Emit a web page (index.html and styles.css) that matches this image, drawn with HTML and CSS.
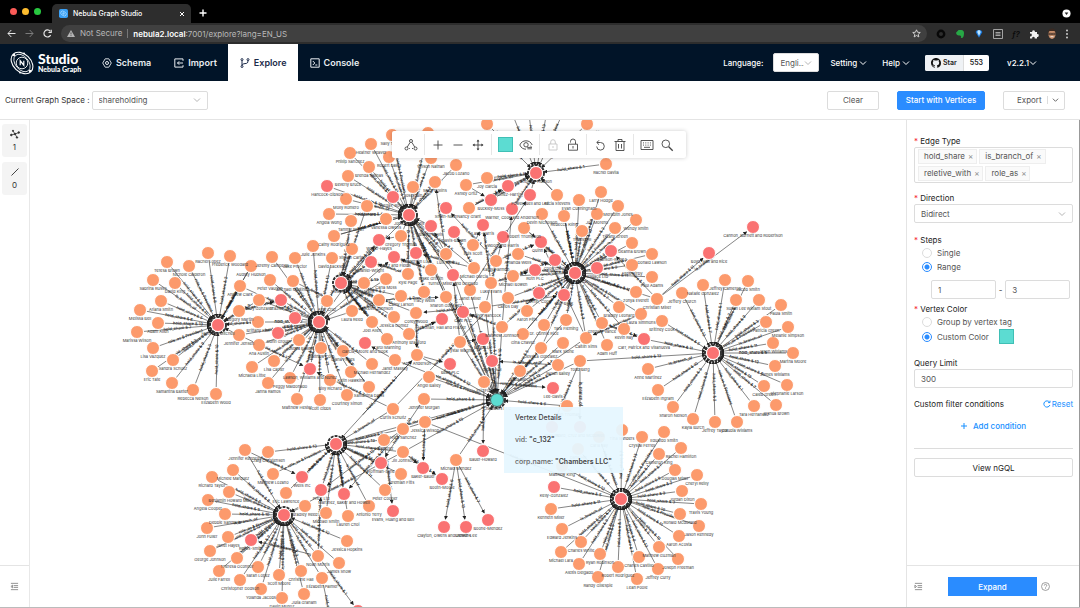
FILE: index.html
```html
<!DOCTYPE html>
<html lang="en">
<head>
  <meta charset="UTF-8">
  <meta name="viewport" content="width=device-width, initial-scale=1.0">
  <title>Nebula Graph Studio</title>
  <link rel="stylesheet" href="styles.css">
</head>
<body>

  <!-- Browser window -->
  <div class="tab-strip">
    <div class="lights">
      <span class="light light-red"></span>
      <span class="light light-yellow"></span>
      <span class="light light-green"></span>
    </div>
    <div class="browser-tab">
      <svg class="favicon" viewBox="0 0 10 10"><rect width="10" height="10" rx="2" fill="#3aa0f5"/><ellipse cx="5" cy="5" rx="3.4" ry="2.3" transform="rotate(35 5 5)" fill="none" stroke="#a8dbff" stroke-width=".8"/><circle cx="5" cy="5" r="1.3" fill="#8accff"/></svg>
      <span class="browser-title">Nebula Graph Studio</span>
      <button class="plain" aria-label="Close tab"><svg width="6" height="6" viewBox="0 0 6 6"><path d="M1 1l4 4M5 1l-4 4" stroke="#fff"/></svg></button>
    </div>
    <button class="plain new-tab" aria-label="New tab"><svg width="8" height="8" viewBox="0 0 8 8"><path d="M4 .5v7M.5 4h7" stroke="#fff" stroke-width="1.4"/></svg></button>
    <svg class="profile-dot" viewBox="0 0 10 10"><circle cx="5" cy="5" r="4.5" fill="#fff"/><path d="M3 4h4L5 6.8z" fill="#222"/></svg>
  </div>

  <div class="address-bar">
    <button class="plain" aria-label="Back"><svg width="9" height="9" viewBox="0 0 9 9" fill="none" stroke="#e6e6e6"><path d="M8.5 4.5H1M4.3 1L1 4.5 4.3 8"/></svg></button>
    <button class="plain" aria-label="Forward"><svg width="9" height="9" viewBox="0 0 9 9" fill="none" stroke="#7c7c7c"><path d="M.5 4.5H8M4.7 1L8 4.5 4.7 8"/></svg></button>
    <button class="plain" aria-label="Reload"><svg width="9" height="9" viewBox="0 0 9 9" fill="none" stroke="#e6e6e6" stroke-width="1.2"><path d="M7.6 6A3.5 3.5 0 1 1 7.2 2.3"/><path d="M8.2.8v2.7H5.5"/></svg></button>
    <div class="url">
      <svg width="8" height="7" viewBox="0 0 8 7"><path d="M4 0l4 7H0z" fill="#b5b5b5"/><path d="M4 2.4v2M4 5.2v.9" stroke="#404040" stroke-width=".8"/></svg>
      <span class="not-secure">Not Secure</span>
      <span class="url-text"><b>nebula2.local</b>:7001/explore?lang=EN_US</span>
      <svg class="star" width="9" height="9" viewBox="0 0 10 10" fill="none" stroke="#ddd"><path d="M5 .9l1.2 2.7 3 .3-2.3 2 .7 2.9L5 7.2 2.4 8.8l.7-2.9-2.3-2 3-.3z"/></svg>
    </div>
    <div class="extensions">
      <svg width="10" height="10" viewBox="0 0 10 10"><circle cx="5" cy="5" r="3.2" fill="none" stroke="#080808" stroke-width="2.4"/></svg>
      <svg width="10" height="10" viewBox="0 0 10 10" fill="#27a745"><path d="M1 3.8L3.6 1h2.6c2 .3 3 1.3 2.8 3.2-.1 2.4-.5 4.4-2 4.8-1.4.2-1.6-1.4-.7-1.8-.6-.8-1.4-.9-2-.7C2.5 6.7 1.2 5.5 1 3.8z"/></svg>
      <svg width="10" height="10" viewBox="0 0 10 10"><path d="M1.6 3L3 1.2h4L8.4 3 5 8.8z" fill="#1b7be0"/><path d="M3.2 3L4 1.2h2L6.8 3 5 7z" fill="#bfe6ff"/></svg>
      <svg width="10" height="10" viewBox="0 0 10 10" fill="none" stroke="#b0b0b0"><path d="M.5.5h9v9h-9zM2.5 3.5h5M2.5 5h5M2.5 6.5h5" stroke-width=".9"/></svg>
      <span class="fx">ƒ?</span>
      <svg width="10" height="10" viewBox="0 0 10 10" fill="#f2f2f2"><path d="M1 3h2.2a1.4 1.4 0 1 1 2.7 0H8v2.2a1.4 1.4 0 1 1 0 2.7V9.500H5.700a1.300 1.300 0 1 0-2.500 0H1V7.200a1.300 1.300 0 1 0 0-2.400z"/></svg>
      <svg width="8" height="12" viewBox="1 0 8 12"><ellipse cx="5" cy="6" rx="3.6" ry="5" fill="#c78f6b"/><path d="M1.200 5C1 2 2.500.5 5 .5S9 2 8.800 5L7.500 3h-5z" fill="#3a2a22"/><path d="M1.800 5.300h2.700v1.400H1.800zM5.500 5.300h2.700v1.400H5.500z" fill="none" stroke="#2b211c" stroke-width=".7"/><path d="M3.500 8.700h3" stroke="#fff" stroke-width=".8"/></svg>
      <svg width="4" height="10" viewBox="0 0 4 10" fill="#ddd"><circle cx="2" cy="1.5" r=".9"/><circle cx="2" cy="5" r=".9"/><circle cx="2" cy="8.5" r=".9"/></svg>
    </div>
  </div>

  <!-- Studio navigation -->
  <header class="nav">
    <div class="logo">
      <svg class="logo-mark" viewBox="0 0 24 24" fill="none" stroke="#fff"><ellipse cx="12" cy="12" rx="12.5" ry="8.8" transform="rotate(44 12 12)" stroke-width="1.1"/><ellipse cx="12" cy="12" rx="10" ry="6.6" transform="rotate(50 12 12)" stroke-width=".8"/><circle cx="12" cy="12" r="5.8" stroke-width=".9"/><path d="M10.200 14.200V9.800l3.600 4.400V9.800" stroke-width="1.2"/><g fill="#fff" stroke="none"><circle cx="4" cy="4" r="1.2"/><circle cx="20" cy="20" r="1.2"/><circle cx="14" cy="2.5" r="1"/><circle cx="10" cy="21.5" r="1"/></g></svg>
      <div class="logo-text">
        <span class="logo-name">Studio</span>
        <span class="logo-sub">Nebula Graph</span>
      </div>
    </div>
    <nav class="nav-tabs">
      <a class="nav-tab" href="#schema"><svg width="10" height="10" viewBox="0 0 10 10" fill="none" stroke="currentColor"><path d="M3.200.8h3.600L9.300 5 6.800 9.200H3.200L.7 5z" stroke-width=".9"/><circle cx="5" cy="5" r="1.5"/></svg>Schema</a>
      <a class="nav-tab" href="#import"><svg width="10" height="10" viewBox="0 0 10 10" fill="none" stroke="currentColor"><path d="M9 2.800V.9H.8v8.200H9V7.200M3.500 5H9M5.200 3.300L3.500 5l1.700 1.700"/></svg>Import</a>
      <a class="nav-tab nav-active" href="#explore"><svg width="10" height="10" viewBox="0 0 10 10" fill="none" stroke="currentColor"><circle cx="2" cy="1.6" r="1"/><circle cx="8" cy="1.6" r="1"/><circle cx="2" cy="8.5" r="1"/><path d="M2 2.600v5M8 2.600c0 2.600-1 2.800-3 3-1.700.2-2.600.5-3 1.500"/></svg>Explore</a>
      <a class="nav-tab" href="#console"><svg width="10" height="10" viewBox="0 0 10 10" fill="none" stroke="currentColor"><path d="M.8.8h8.400v8.400H.8zM2.800 3l2 2-2 2M5.300 7h2"/></svg>Console</a>
    </nav>
    <div class="nav-right">
      <label for="language">Language:</label>
      <div class="select language">
        <select id="language"><option>Engli...</option><option>中文</option></select>
        <svg class="chevron" viewBox="0 0 8 8"><path d="M1 2.500l3 3 3-3"/></svg>
      </div>
      <button class="plain menu">Setting <svg class="chevron" viewBox="0 0 8 8"><path d="M1 2.500l3 3 3-3"/></svg></button>
      <button class="plain menu">Help <svg class="chevron" viewBox="0 0 8 8"><path d="M1 2.500l3 3 3-3"/></svg></button>
      <a class="github" href="#star">
        <span class="github-star"><svg width="10" height="10" viewBox="0 0 16 16"><path fill="#111" d="M8 0C3.580 0 0 3.580 0 8c0 3.540 2.290 6.530 5.470 7.590.4.070.55-.17.55-.38v-1.500c-2.230.5-2.700-.95-2.700-.95-.36-.92-.89-1.170-.89-1.170-.73-.5.060-.49.060-.49.8.060 1.230.83 1.230.83.71 1.220 1.870.87 2.330.66.070-.52.280-.87.500-1.070-1.780-.2-3.640-.89-3.640-3.950 0-.87.310-1.590.82-2.150-.08-.2-.36-1.020.08-2.120 0 0 .67-.21 2.200.82a7.600 7.600 0 0 1 4 0c1.530-1.040 2.200-.82 2.200-.82.44 1.100.16 1.920.08 2.120.51.560.82 1.270.82 2.150 0 3.070-1.870 3.750-3.650 3.950.29.25.54.73.54 1.480v2.210c0 .21.15.46.55.38A8 8 0 0 0 16 8c0-4.420-3.580-8-8-8z"/></svg>Star</span>
        <span class="github-count">553</span>
      </a>
      <button class="plain menu version">v2.2.1<svg class="chevron" viewBox="0 0 8 8"><path d="M1 2.500l3 3 3-3"/></svg></button>
    </div>
  </header>

  <!-- Graph space and actions -->
  <div class="space-bar">
    <label for="space">Current Graph Space :</label>
    <div class="select space">
      <select id="space"><option>shareholding</option></select>
      <svg class="chevron" viewBox="0 0 8 8"><path d="M1 2.500l3 3 3-3"/></svg>
    </div>
    <div class="actions">
      <button class="btn btn-clear">Clear</button>
      <button class="btn btn-primary btn-start">Start with Vertices</button>
      <button class="btn btn-export">Export<svg class="chevron" viewBox="0 0 8 8"><path d="M1 2.500l3 3 3-3"/></svg></button>
    </div>
  </div>

  <main class="workspace">
    <aside class="rail">
      <button class="plain counter"><svg width="10" height="10" viewBox="0 0 10 10" stroke="#333" fill="#333"><path d="M1 6l4-1 4-1.500M5 5L3 2M5 5l2 3.500" fill="none" stroke-width=".8"/><circle cx="1.3" cy="6" r=".8"/><circle cx="8.8" cy="3.5" r=".8"/><circle cx="3" cy="1.8" r=".6"/><circle cx="7" cy="8.5" r=".7"/><circle cx="5" cy="5" r=".8"/></svg>1</button>
      <button class="plain counter"><svg width="10" height="10" viewBox="0 0 10 10"><path d="M1.500 8.500l7-7" stroke="#444"/></svg>0</button>
      <div class="rail-footer">
        <button class="plain" aria-label="Expand list"><svg class="fold" viewBox="0 0 10 10"><path d="M1 1.500h8M4 4h5M4 6h5M1 8.500h8M2.800 3.500L1 5l1.800 1.500z"/></svg></button>
      </div>
    </aside>

    <section class="canvas">
      <svg id="graph" class="graph">
        <defs>
          <marker id="arrow" viewBox="0 0 6 6" refX="5" refY="3" markerWidth="4" markerHeight="4" markerUnits="userSpaceOnUse" orient="auto"><path d="M0 0l6 3-6 3z" fill="#222"/></marker>
        </defs>
      </svg>

      <div class="toolbar">
        <div class="tool-group">
          <button class="plain tool" aria-label="Layout"><svg viewBox="0 0 14 14"><circle cx="7" cy="3" r="1.5"/><circle cx="2.5" cy="10.5" r="1.5"/><circle cx="11.5" cy="10.5" r="1.5"/><path d="M6 4.500L3.300 9M8 4.500L10.700 9M5 10.500h.8M8 10.500h1"/></svg></button>
        </div>
        <div class="tool-group">
          <button class="plain tool" aria-label="Zoom in"><svg viewBox="0 0 14 14"><path d="M7 2.500v9M2.500 7h9"/></svg></button>
          <button class="plain tool" aria-label="Zoom out"><svg viewBox="0 0 14 14"><path d="M2.500 7h9"/></svg></button>
          <button class="plain tool" aria-label="Drag"><svg viewBox="0 0 14 14"><path d="M7 2.500v9M2.500 7h9"/><path d="M7 1.500L5.600 3.600h2.800zM7 12.500l1.400-2.100H5.600zM1.500 7l2.100-1.400v2.800zM12.500 7l-2.100 1.400V5.600z" fill="#333" stroke="none"/></svg></button>
        </div>
        <div class="tool-group">
          <button class="plain swatch" aria-label="Vertex color"></button>
          <button class="plain tool" aria-label="Show properties"><svg viewBox="0 0 14 14"><path d="M.8 7C2 4.200 4.200 2.800 7 2.800S12 4.200 13.200 7M.8 7C2 9.800 4.200 11.200 7 11.200"/><circle cx="7" cy="6.8" r="2.2"/><path d="M8.200 9.400h4.600l-1.400-1.400M12.800 10.800H8.400"/></svg></button>
        </div>
        <div class="tool-group">
          <button class="plain tool faded" aria-label="Lock"><svg viewBox="0 0 14 14"><path d="M3 6h8v6H3zM4.700 6V4a2.300 2.300 0 0 1 4.600 0v2M7 8v2"/></svg></button>
          <button class="plain tool" aria-label="Unlock"><svg viewBox="0 0 14 14"><path d="M2.500 6.200h9v6h-9zM4.500 4.500V3.500a2.500 2.500 0 0 1 5 0v2.500M7 8v2.500"/></svg></button>
        </div>
        <div class="tool-group">
          <button class="plain tool" aria-label="Undo"><svg viewBox="0 0 14 14"><path d="M4 4.500h3.500a3.800 3.800 0 1 1-3.800 4M6 2.300L3.800 4.500 6 6.700"/></svg></button>
          <button class="plain tool" aria-label="Delete"><svg viewBox="0 0 14 14"><path d="M1.500 3.500h11M5 3.200V1.500h4v1.700M3 3.500v9h8v-9M5.500 6v4.500M8.500 6v4.500"/></svg></button>
        </div>
        <div class="tool-group">
          <button class="plain tool" aria-label="Shortcuts"><svg viewBox="0 0 14 14"><path d="M1 2.500h12v9H1zM4 9.300h6"/><path d="M3 4.900h8M3 7.100h8" stroke-dasharray="1 1.3"/></svg></button>
          <button class="plain tool" aria-label="Search"><svg viewBox="0 0 14 14"><circle cx="5.8" cy="5.8" r="3.8"/><path d="M8.700 8.700l4 4" stroke-width="1.3"/></svg></button>
        </div>
      </div>

      <div class="details">
        <p>Vertex Details</p>
        <p class="detail-row">vid: <b>"c_132"</b></p>
        <p class="detail-row">corp.name: <b>"Chambers LLC"</b></p>
      </div>
    </section>

    <!-- Expand panel -->
    <form class="panel">
      <div class="panel-body">
        <div class="field">
          <span class="field-title required">Edge Type</span>
          <div class="tags">
            <span class="tag">hold_share<button type="button" class="plain" aria-label="Remove hold_share">×</button></span>
            <span class="tag">is_branch_of<button type="button" class="plain" aria-label="Remove is_branch_of">×</button></span>
            <span class="tag">reletive_with<button type="button" class="plain" aria-label="Remove reletive_with">×</button></span>
            <span class="tag">role_as<button type="button" class="plain" aria-label="Remove role_as">×</button></span>
          </div>
        </div>

        <div class="field">
          <label class="field-title required" for="direction">Direction</label>
          <div class="select">
            <select id="direction"><option>Bidirect</option><option>Outgoing</option><option>Incoming</option></select>
            <svg class="chevron" viewBox="0 0 8 8"><path d="M1 2.500l3 3 3-3"/></svg>
          </div>
        </div>

        <div class="field field-steps">
          <span class="field-title required">Steps</span>
          <label class="radio"><input type="radio" name="steps">Single</label>
          <label class="radio"><input type="radio" name="steps" checked>Range</label>
          <div class="range">
            <input type="text" class="text-input" value="1" aria-label="Minimum steps">
            <span>-</span>
            <input type="text" class="text-input" value="3" aria-label="Maximum steps">
          </div>
        </div>

        <div class="field field-color">
          <span class="field-title required">Vertex Color</span>
          <label class="radio"><input type="radio" name="color">Group by vertex tag</label>
          <div class="color-row">
            <label class="radio"><input type="radio" name="color" checked>Custom Color</label>
            <button type="button" class="plain swatch" aria-label="Pick color"></button>
          </div>
        </div>

        <div class="field">
          <label class="field-title" for="limit">Query Limit</label>
          <input type="text" class="text-input" id="limit" value="300">
        </div>

        <div class="filter">
          <div class="filter-head">
            <span>Custom filter conditions</span>
            <button type="button" class="plain link"><svg width="8" height="8" viewBox="0 0 8 8" fill="none" stroke="currentColor"><path d="M6.900 5A3.100 3.100 0 1 1 6.500 2.200M7 .7v1.900H5.100"/></svg>Reset</button>
          </div>
          <button type="button" class="plain link add"><svg width="6" height="6" viewBox="0 0 6 6"><path d="M3 0v6M0 3h6" stroke="currentColor"/></svg>Add condition</button>
        </div>
        <button type="button" class="btn btn-ngql">View nGQL</button>
      </div>
      <div class="panel-footer">
        <button type="button" class="plain" aria-label="Collapse panel"><svg class="fold" viewBox="0 0 10 10"><path d="M1 1.500h8M4 4h5M4 6h5M1 8.500h8M1 3.500L2.800 5 1 6.500z"/></svg></button>
        <button type="button" class="btn btn-primary btn-expand">Expand</button>
        <svg width="9" height="9" viewBox="0 0 10 10" fill="none" stroke="#888" stroke-width=".9"><circle cx="5" cy="5" r="4.4"/><path d="M3.600 4a1.400 1.400 0 1 1 2 1.200c-.5.300-.6.500-.6 1M5 7v.8"/></svg>
      </div>
    </form>
  </main>

  <script src="graph.js"></script>
</body>
</html>
```

FILE: styles.css
```css
/* General Styles */
* {
  box-sizing: border-box;
}

body {
  margin: 0;
  height: 100vh;
  display: flex;
  flex-direction: column;
  overflow: hidden;
  background: #fff;
  color: #333;
  font-family: Inter, "Liberation Sans", sans-serif;
  font-size: 8px;
  line-height: 12px;
}

button, input, select {
  font: inherit;
  color: inherit;
}

.plain {
  display: flex;
  align-items: center;
  justify-content: center;
  padding: 0;
  border: none;
  background: none;
  cursor: pointer;
}

svg {
  flex: none;
}

.chevron {
  width: 8px;
  height: 8px;
  fill: none;
  stroke: currentColor;
  stroke-width: 1;
}

/* Browser window */
.tab-strip {
  display: flex;
  align-items: flex-end;
  height: 23px;
  flex: none;
  background: #000;
  color: #fff;
}

.lights {
  display: flex;
  gap: 5px;
  width: 52px;
  padding: 0 0 8px 10px;
}

.light {
  width: 7px;
  height: 7px;
  border-radius: 50%;
}

.light-red { background: #fc5b57; }
.light-yellow { background: #fdbc2e; }
.light-green { background: #28c840; }

.browser-tab {
  display: flex;
  align-items: center;
  gap: 5px;
  width: 139px;
  height: 19px;
  padding: 0 6px 0 7px;
  border-radius: 5px 5px 0 0;
  background: #2d2d2d;
}

.favicon {
  width: 9px;
  height: 9px;
}

.browser-title {
  flex: 1;
  font-size: 7px;
  font-weight: 500;
}

.new-tab {
  margin: 0 0 6px 8px;
}

.profile-dot {
  width: 9px;
  height: 9px;
  margin: 0 9px 5px auto;
}

.address-bar {
  display: flex;
  align-items: center;
  gap: 9px;
  height: 21px;
  flex: none;
  padding: 0 11px 0 7px;
  background: #2d2d2d;
}

.url {
  display: flex;
  align-items: center;
  flex: 1;
  gap: 5px;
  height: 17px;
  padding: 0 6px 0 6px;
  border-radius: 9px;
  background: #404040;
  color: #b8b8b8;
}

.not-secure {
  padding-right: 5px;
  border-right: 1px solid #777;
  line-height: 9px;
}

.url-text b {
  color: #fff;
  font-weight: 600;
}

.star {
  margin-left: auto;
}

.extensions {
  display: flex;
  align-items: center;
  gap: 9px;
}

.fx {
  width: 8px;
  color: #0a0a0a;
  font-style: italic;
  font-weight: 600;
}

/* Navigation */
.nav {
  display: flex;
  align-items: center;
  height: 37px;
  flex: none;
  padding-right: 43px;
  background: #011428;
  color: #fff;
}

.logo {
  display: flex;
  align-items: center;
  gap: 4px;
  width: 90px;
  padding-left: 10px;
}

.logo-mark {
  width: 24px;
  height: 24px;
}

.logo-text {
  display: flex;
  flex-direction: column;
  font-family: Lato, sans-serif;
  font-weight: 900;
}

.logo-name {
  font-size: 14px;
  line-height: 13px;
}

.logo-sub {
  font-size: 7px;
  line-height: 8px;
}

.nav-tabs {
  display: flex;
  align-self: stretch;
}

.nav-tab {
  display: flex;
  align-items: center;
  gap: 4px;
  padding: 0 11px 0 12px;
  color: #e8ecf0;
  font-size: 9px;
  font-weight: 600;
  text-decoration: none;
}

.nav-active {
  background: #fff;
  color: #1c2b4a;
}

.nav-right {
  display: flex;
  align-items: center;
  margin-left: auto;
  font-weight: 500;
}

.menu {
  gap: 2px;
  margin-right: 15px;
}

.nav-right .menu {
  font-weight: 500;
}

.nav-right .version {
  gap: 0;
  margin: 0;
}

/* Drop-downs */
.select {
  display: flex;
  align-items: center;
  height: 19px;
  padding-right: 6px;
  border: 1px solid #dcdcdc;
  border-radius: 2px;
  background: #fff;
  color: #555;
}

.select select {
  flex: 1;
  min-width: 0;
  height: 17px;
  padding: 0 0 0 6px;
  border: none;
  outline: none;
  background: transparent;
  appearance: none;
}

.select .chevron {
  color: #b5b5b5;
}

.language {
  width: 46px;
  margin: 0 11px 0 10px;
  font-weight: 400;
}

.github {
  display: flex;
  height: 16px;
  margin-right: 18px;
  border-radius: 2px;
  overflow: hidden;
  background: #fff;
  color: #222;
  font-size: 7px;
  font-weight: 600;
  line-height: 16px;
  text-decoration: none;
}

.github-star {
  display: flex;
  align-items: center;
  gap: 2px;
  padding: 0 6px;
  border-right: 1px solid #ddd;
  background: #eff2f5;
}

.github-count {
  padding: 0 6px;
}

/* Space bar */
.space-bar {
  display: flex;
  align-items: center;
  height: 39px;
  flex: none;
  padding: 0 15px 0 5px;
  border-bottom: 1px solid #e4e4e4;
}

.space {
  width: 116px;
  margin-left: 2px;
}

.actions {
  display: flex;
  gap: 18px;
  margin-left: auto;
}

.btn {
  height: 19px;
  padding: 0;
  border: 1px solid #dcdcdc;
  border-radius: 2px;
  background: #fff;
  color: #555;
  cursor: pointer;
}

.btn-primary {
  border-color: #2a8cff;
  background: #2a8cff;
  color: #fff;
  font-weight: 500;
}

.btn-clear {
  width: 52px;
}

.btn-start {
  width: 88px;
}

.btn-export {
  display: flex;
  align-items: center;
  justify-content: space-between;
  width: 62px;
  padding: 0 5px 0 13px;
}

.btn-export .chevron {
  width: 12px;
  padding-left: 4px;
  border-left: 1px solid #ddd;
}

/* Workspace */
.workspace {
  display: flex;
  flex: 1;
  min-height: 0;
  border-bottom: 1px solid #bbb;
}

.rail {
  display: flex;
  flex-direction: column;
  gap: 5px;
  width: 30px;
  flex: none;
  padding: 4px 2px 0;
  border-right: 1px solid #e8e8e8;
}

.counter {
  flex-direction: column;
  gap: 2px;
  height: 33px;
  border-radius: 3px;
  background: #f4f4f4;
}

.rail-footer {
  display: flex;
  justify-content: center;
  height: 42px;
  margin: auto -2px 0;
  border-top: 1px solid #e4e4e4;
}

.fold {
  width: 9px;
  height: 9px;
  fill: none;
  stroke: #888;
  stroke-width: 1;
}

.canvas {
  position: relative;
  flex: 1;
  min-width: 0;
  overflow: hidden;
}

/* Graph */
.graph {
  display: block;
  width: 100%;
  height: 100%;
  font-size: 4px;
  text-anchor: middle;
}

.edge {
  stroke: #333;
  stroke-width: 0.6;
}

.edge-label {
  fill: #111;
  font-weight: 500;
}

.node {
  fill: #fc9a6c;
  stroke: #fff;
}

.node-corp {
  fill: #fa7272;
}

.node-selected {
  fill: #5cdcd2;
  stroke: #3d5a5a;
}

.hub-ring {
  fill: none;
  stroke: #333;
  stroke-width: 2;
  stroke-dasharray: 3 1;
}

.node-label {
  fill: #333;
}

/* Toolbar over the graph */
.toolbar {
  position: absolute;
  top: 11px;
  left: 362px;
  display: flex;
  align-items: center;
  height: 27px;
  padding: 0 6px;
  border-radius: 2px;
  background: #fff;
  box-shadow: 0 0 4px rgba(0, 0, 0, 0.2);
}

.tool-group {
  display: flex;
  align-items: center;
  gap: 6px;
  height: 21px;
  padding: 0 6px;
  border-right: 1px solid #e6e6e6;
}

.tool-group:last-child {
  border-right: none;
}

.tool svg {
  width: 14px;
  height: 14px;
  fill: none;
  stroke: #444;
  stroke-width: 0.9;
}

.faded {
  opacity: 0.3;
}

.swatch {
  width: 15px;
  height: 15px;
  border: 1px solid #3fbfb5;
  background: #5cdcd2;
}

/* Vertex details */
.details {
  position: absolute;
  top: 287px;
  left: 474px;
  padding: 0 11px;
  background: rgba(230, 246, 255, 0.94);
  color: #444;
  font-size: 7px;
  font-weight: 500;
  line-height: 22px;
}

.details p {
  margin: 0;
}

.details b {
  font-weight: 600;
}

.detail-row {
  color: #666;
}

.detail-row b {
  color: #444;
}

/* Expand panel */
.panel {
  display: flex;
  flex-direction: column;
  width: 174px;
  flex: none;
  border-left: 1px solid #e4e4e4;
  border-right: 1px solid #999;
}

.panel-body {
  flex: 1;
  padding: 15px 6px 0 7px;
}

.field {
  margin-bottom: 9px;
}

.field-steps {
  margin-bottom: 4px;
  padding-top: 2px;
}

.field-color {
  margin-bottom: 13px;
}

.field-title {
  display: block;
  color: #222;
}

.required::before {
  content: "* ";
  color: #f5222d;
}

.tags {
  display: flex;
  flex-wrap: wrap;
  gap: 2px;
  padding: 1px 3px;
  border: 1px solid #dcdcdc;
  border-radius: 2px;
}

.tag {
  display: flex;
  gap: 3px;
  padding: 0 3px 0 5px;
  border: 1px solid #eee;
  background: #fafafa;
  color: #555;
  line-height: 13px;
}

.tag .plain {
  color: #888;
}

.radio {
  display: flex;
  align-items: center;
  gap: 5px;
  height: 14px;
  padding-left: 8px;
  color: #555;
}

.radio input {
  width: 10px;
  height: 10px;
  margin: 0;
  border: 1px solid #dcdcdc;
  border-radius: 50%;
  appearance: none;
}

.radio input:checked {
  border-color: #2a8cff;
  background: radial-gradient(#2a8cff 2px, #fff 3px);
}

.text-input {
  display: block;
  width: 100%;
  min-width: 0;
  height: 19px;
  padding: 0 6px;
  border: 1px solid #dcdcdc;
  border-radius: 2px;
  outline: none;
  color: #555;
}

.range {
  display: flex;
  align-items: center;
  gap: 3px;
  padding: 6px 3px 0 17px;
}

.color-row {
  display: flex;
  align-items: center;
  gap: 10px;
}

.filter {
  padding: 1px 0 16px;
  border-bottom: 1px solid #dcdcdc;
}

.filter-head {
  display: flex;
  justify-content: space-between;
  color: #222;
}

.link {
  gap: 1px;
  color: #1890ff;
}

.add {
  gap: 6px;
  width: 100%;
  margin-top: 10px;
  font-weight: 500;
}

.btn-ngql {
  width: 100%;
  margin-top: 9px;
  color: #222;
}

.panel-footer {
  display: flex;
  align-items: center;
  height: 42px;
  padding: 0 29px 0 7px;
  border-top: 1px solid #e4e4e4;
}

.btn-expand {
  width: 89px;
  margin: 0 4px 0 auto;
  border-radius: 0;
}
```

FILE: graph.js
```js
const SVG = 'http://www.w3.org/2000/svg';

// Saved layout: every hub with the vertices that point to it, as [x, y, name, isCorp]
const hubs = [
  { x: 218, y: 325, name: 'Hunt and Mitchell', nodes: [
    [208, 253, 'Rachel Lopez'], [230, 256, 'Frederick Woodard'], [167, 262, 'Teresa Brown'],
    [189, 266, 'Nichole Calderon'], [251, 266, 'Audrey Hudson'], [153, 280, 'Sabrina Russo'],
    [175, 283, 'David King'], [161, 301, 'Ariana Smith'], [240, 286, 'Andrew Clark'],
    [140, 310, 'Melissa Bell'], [158, 323, 'Adam Allen'], [137, 332, 'Marissa Wilson'],
    [153, 348, 'Lisa Vazquez'], [173, 360, 'Sandra Schultz'], [152, 371, 'Eric Tate'],
    [172, 383, 'Samantha Baxter'], [193, 390, 'Rebecca Nelson'], [216, 394, 'Elizabeth Wood'],
    [239, 311, 'Gregory Martin'], [239, 335, 'Jennifer Jensen']
  ] },
  { x: 319, y: 322, name: 'Smith Ltd', nodes: [
    [272, 257, 'Jeremy Campbell'], [295, 258, 'Jake Proctor'], [313, 246, 'Julie Jenkins'],
    [332, 258, 'David Jackson'], [270, 280, 'Peter Vaughn'], [293, 281, 'Michael Martinez'],
    [259, 300, 'Mary Gonzalez'], [258, 322, 'Brittany Kim'], [259, 345, 'Ana Austin'],
    [252, 367, 'Michaela Little'], [274, 361, 'Lisa Carter'], [268, 383, 'Janna Ramos'],
    [290, 378, 'Peggy Maldonado'], [297, 399, 'Matthew Hester'], [320, 400, 'Scott Gibbs'],
    [347, 395, 'Courtney Simon'], [330, 380, 'Billy Richard'], [351, 372, 'Keith Hawkins'],
    [369, 387, 'Samantha Davis'], [299, 340, 'Joshua Baker'], [321, 348, 'Matthew Cole'],
    [343, 351, 'Diana Flores'], [372, 364, 'Michael Hernandez'], [327, 301, 'Amy Cruz'],
    [281, 300, 'Frazier LLC', 1], [295, 318, 'Reid-Moore', 1], [278, 333, 'Dunn Group', 1],
    [310, 369, 'Lawson, Williams and Nunez', 1]
  ] },
  { x: 341, y: 283, name: 'Avila PLC', nodes: [
    [364, 283, 'Kelly Frank'], [386, 279, 'Carla Moss'], [401, 296, 'Cathy Larson'],
    [379, 300, 'Kevin Johnson'], [352, 311, 'Laura Reed'], [372, 322, 'Joel Allen'],
    [387, 339, 'Carol Manning'], [394, 317, 'Jessica Gomez'], [352, 249, 'Steven Carter'],
    [351, 221, 'Tammy Bryan'], [367, 206, 'Alan Ford'], [371, 262, 'Daniel-Wright', 1],
    [379, 240, 'Walter-Hayes', 1], [409, 334, 'Anthony Bradford']
  ] },
  { x: 409, y: 215, name: 'Jones and Sons', nodes: [
    [371, 144, 'Heather Weaver'], [350, 153, 'Phillip Sanchez'], [369, 167, 'Brenda Salinas'],
    [389, 157, 'Robert Davis'], [392, 135, 'Sally Tanner'], [428, 133, 'John Porter'],
    [348, 176, 'Beverly Bruce'], [327, 186, 'Hancock-Gibson', 1], [346, 199, 'Molly Romero'],
    [393, 197, 'Vargas, Rollins', 1], [329, 214, 'Angela Wong'], [386, 219, 'Vanessa Owens'],
    [334, 236, 'Cathy Rodriguez'], [413, 187, 'Jose Cain'], [435, 182, 'Mary Collins'],
    [456, 165, 'Jacob Lozano'], [431, 158, 'Wilson Nathan'], [431, 226, 'Brown-Davis', 1],
    [446, 254, 'Luis Kane'], [431, 270, 'Blake Griffith'], [401, 236, 'Gregory Thomas'],
    [416, 253, 'Henderson LLC', 1], [453, 275, 'Turner, Miller and Delgado', 1],
    [474, 268, 'Michael Garcia'], [408, 274, 'Kyle Page'], [446, 297, 'Sharon Gonzalez']
  ] },
  { x: 536, y: 173, name: 'Thomas-Hudson', nodes: [
    [487, 124, 'Megan Harris'], [587, 124, 'Deborah Hamilton'], [606, 164, 'Rachel Davila'],
    [487, 178, 'Joy Garcia'], [508, 186, 'Gomez-Harris', 1], [530, 195, 'Powell, Bell and Lee', 1],
    [557, 195, 'Alicia Stevens'], [512, 209, 'Warner, Cook and Anderson', 1],
    [466, 185, 'Ashley Ortiz'], [469, 208, 'Nancy Grant'], [491, 200, 'Buckley-Moss', 1],
    [510, 108, ''], [528, 105, ''], [548, 105, ''], [565, 108, '']
  ] },
  { x: 575, y: 273, name: 'Potter-Reed', nodes: [
    [579, 200, 'Evan Cunningham'], [601, 192, 'Larry Hodge'], [618, 206, 'Meredith Jones'],
    [542, 214, 'Devin Nicholson'], [564, 216, 'Rebecca Kline'], [597, 214, 'Joy Moreno'],
    [636, 220, 'Wendy Smith'], [582, 231, 'Travis Gill'], [615, 228, 'Tiffany Green'],
    [524, 228, 'Robert Thompson'], [541, 242, 'Quinn Inc', 1], [518, 254, 'Amanda Wells'],
    [555, 260, 'Cook Group', 1], [611, 251, 'Hanson-Reed', 1], [632, 243, 'Deanna Brown'],
    [652, 254, 'Donald Lawson'], [632, 265, 'Anne Kirby'], [597, 268, 'Wallace Ltd', 1],
    [535, 270, 'Roth PLC', 1], [513, 276, 'Michael Bowen'], [652, 277, 'Paul Adams'],
    [636, 292, 'Tonya Everett'], [657, 299, 'Christian Miller'], [539, 293, 'Griffin, Cook', 1],
    [564, 295, 'Hall-Beck', 1], [619, 307, 'Bradley Leonard'], [641, 314, 'Laura Simmons'],
    [602, 323, 'Gregory Vance'], [624, 329, 'Kevin Ray'], [586, 338, 'Caitlin Sims'],
    [607, 345, 'Adam Huff'], [566, 320, 'Tara Fleming'], [544, 325, 'Dr. Connie Rice'],
    [523, 334, 'Gina Chavez'], [527, 311, 'Aaron Pitts'], [508, 298, 'Carlos Day'],
    [541, 348, 'Jessica Gonzalez']
  ] },
  { x: 713, y: 353, name: '', nodes: [
    [682, 293, 'Jeffery Church'], [703, 285, 'Natalie Gonzalez'], [725, 280, 'Jeffrey Cameron'],
    [748, 281, 'Jacob Smith'], [736, 300, 'Susan Lee'], [759, 300, 'William Stout'],
    [781, 305, 'Paula Smith'], [766, 322, 'Patricia Green'], [788, 327, 'Melanie Simpson'],
    [773, 343, 'Jason Williams'], [793, 353, 'Martha Moore'], [775, 366, 'James Williams'],
    [787, 385, 'Stephanie Larson'], [764, 386, 'Caleb Green'], [776, 405, 'Joshua Brown'],
    [754, 406, 'Tara Hernandez'], [737, 422, 'Claudia Williams'], [715, 422, 'Jeffrey Taylor'],
    [693, 419, 'Kayla Burch'], [673, 407, 'Sharon Nelson'], [658, 390, 'Elizabeth Ingram'],
    [648, 369, 'Anne Martinez'], [644, 339, 'Carr, Patrick and Villanueva', 1],
    [662, 321, 'Brittney Cook'], [580, 361, 'Todd Berg']
  ] },
  { x: 621, y: 499, name: '', nodes: [
    [664, 432, 'Eduardo Smith'], [642, 437, 'Crystal Ferrell'], [681, 448, 'Rachel Hamilton'],
    [659, 454, 'Cameron King'], [675, 470, 'Douglas Miller'], [697, 475, 'Cheryl Reilly'],
    [682, 491, 'Jordan Dixon'], [701, 504, 'Travis Young'], [680, 514, 'Ronald Mcdonald'],
    [699, 526, 'Jason Kennedy'], [679, 536, 'Aaron Acosta'], [659, 547, 'Matthew Guzman'],
    [678, 559, 'Joseph Freeman'], [639, 557, 'Charles Castillo'], [658, 569, 'Jeffrey Curry'],
    [637, 579, 'Leah Poole'], [618, 567, 'Robert Rodriguez'], [598, 577, 'Randy Gillespie'],
    [600, 554, 'Ryan Robinson'], [579, 564, 'Alexis Delgado'], [581, 542, 'Charles White'],
    [561, 552, 'Michael Lara'], [562, 529, 'Edward Jenkins'], [551, 509, 'Kenneth Miller'],
    [554, 487, 'Kelly-Gonzalez', 1], [562, 466, 'Matthew King'], [578, 449, 'Dana Hill'],
    [599, 437, 'Carla Ray'], [622, 430, 'Tina Sanders']
  ] },
  { x: 284, y: 515, name: '', nodes: [
    [245, 450, 'Jennifer Kennedy'], [233, 470, 'Michele Marquez'], [212, 477, 'Richard Taylor'],
    [229, 492, 'Benjamin Howard MD'], [208, 500, 'Angela Cooper'], [225, 514, 'Debbie Sandoval'],
    [207, 528, 'John Fuller'], [228, 537, 'Janet Hayes'], [251, 540, 'Reyes-Smith', 1],
    [210, 551, 'George Johnson'], [237, 558, 'Theresa Oconnor'], [219, 571, 'Julie Farrell'],
    [240, 580, 'Christopher Dodson'], [258, 567, 'Sarah Lopez'], [279, 575, 'Scott Moore'],
    [261, 589, 'Yolanda Jacobs'], [282, 598, 'David Munoz'], [301, 571, 'Christine Hall'],
    [304, 594, 'Julia Graham'], [322, 578, 'Elizabeth Palmer'], [318, 556, 'Noah Morris'],
    [339, 563, 'James Snow'], [347, 541, 'Jessica Hopkins'], [305, 506, 'Bradley Reed']
  ] },
  { x: 336, y: 444, name: '', nodes: [
    [268, 452, 'Craig Christensen'], [273, 474, 'Matthew Lozano'], [302, 477, 'Wells Inc', 1],
    [286, 493, 'Eric Lawrence'], [321, 490, 'Price Ltd', 1], [344, 494, 'Martinez, Baker and Howell', 1],
    [326, 513, 'Michael Smith'], [348, 516, 'Lauren Choi'], [369, 506, 'Antonio Terry'],
    [385, 490, 'Peter Cooper'], [401, 474, 'Jeremiah Fitts'], [381, 463, 'Hoffman-Lane', 1],
    [403, 452, 'Jill Johnson'], [384, 440, 'Hall Perez'], [403, 429, 'Erica Sanchez'],
    [417, 355, 'Amy Anderson']
  ] },
  { x: 497, y: 400, name: 'Chambers LLC', selected: true, nodes: [
    [470, 290, 'Janet Miller'], [491, 283, 'Luke Evans'], [485, 307, 'Marilyn Hancock'],
    [463, 312, 'Cole PLC', 1], [502, 327, 'Matthew Johnson'], [483, 339, 'Boyd LLC', 1],
    [492, 361, 'Gibbs, Hill', 1], [520, 371, 'Jared Garcia'], [558, 365, 'Susan Bailey'],
    [567, 406, 'Evan Thomas'], [484, 382, 'Eric Fox'], [460, 342, 'Crystal Wagner'],
    [429, 377, 'Angel Bailey'], [424, 399, 'Jennifer Morgan'], [425, 422, 'Jessica Wilson'],
    [456, 460, 'Michael Mendez'], [395, 360, 'Janet Massey'], [563, 343, 'Mark Stone']
  ] }
];

// Vertices outside the hubs
const loose = [
  [753, 227, 'Cannon, Burnett and Robertson', 1], [709, 253, 'Boyd, Hall and Rice', 1],
  [446, 208, 'Smith-Nash', 1], [454, 232, 'Davis-Brown', 1], [483, 225, 'Lane-Harris', 1],
  [503, 237, 'Wood and Harris', 1], [473, 245, 'Luis Scott'], [496, 261, 'Kathy Harmon'],
  [394, 257, 'Valdez and Fields', 1], [424, 292, 'Tracy Wells'], [416, 313, 'Corey Wood'],
  [442, 319, 'Hartman, Hall and Frazier', 1], [365, 343, 'Garcia, Moore and Cook', 1],
  [450, 364, 'Beck PLC', 1], [553, 388, 'Lee-Davis', 1], [393, 409, 'Curtis Schultz'],
  [423, 468, 'Baker-Bauer', 1], [442, 479, 'Booth-Moore', 1], [483, 451, 'Bauer-Howard', 1],
  [393, 511, 'Evans, Huang and Bell', 1], [444, 527, 'Clayton, Owens and Jenkins', 1],
  [466, 527, 'Brewer-Lee', 1], [488, 520, 'Boone-Mendez', 1], [358, 611, '', 1],
  [552, 427, 'Gray Inc', 1], [580, 427, 'Ward, Cruz and Mcdowell', 1]
];

// Edges between vertices that are not hub members: [x1, y1, x2, y2]
const links = [
  [657, 299, 753, 227], [657, 299, 709, 253], [657, 299, 611, 251], [641, 314, 586, 338],
  [456, 460, 444, 527], [456, 460, 466, 527], [456, 460, 488, 520], [425, 422, 423, 468],
  [425, 422, 621, 499], [403, 452, 423, 468], [403, 452, 442, 479], [484, 382, 483, 451],
  [484, 382, 553, 388], [580, 361, 580, 427], [580, 361, 552, 427], [580, 361, 497, 400],
  [384, 440, 393, 511], [403, 429, 344, 494], [403, 429, 321, 490], [403, 452, 284, 515],
  [318, 556, 358, 611], [318, 556, 321, 490], [318, 556, 251, 540], [322, 578, 335, 640],
  [245, 450, 302, 477], [424, 399, 381, 463], [393, 409, 336, 444], [395, 360, 365, 343],
  [417, 355, 450, 364], [417, 355, 497, 400], [409, 334, 442, 319], [416, 313, 341, 283],
  [416, 313, 417, 355], [460, 342, 483, 339], [460, 342, 453, 275], [446, 254, 431, 226],
  [474, 268, 454, 232], [496, 261, 446, 208], [496, 261, 541, 242], [473, 245, 483, 225],
  [446, 254, 435, 182], [485, 307, 564, 295], [485, 307, 503, 237], [491, 283, 535, 270],
  [474, 268, 416, 253], [513, 276, 555, 260], [502, 327, 512, 209], [502, 327, 539, 293],
  [491, 283, 483, 225], [470, 290, 530, 195], [446, 297, 409, 215], [431, 270, 394, 257],
  [408, 274, 371, 262], [424, 292, 416, 253], [386, 279, 319, 322], [401, 296, 319, 322],
  [352, 249, 319, 322], [239, 311, 281, 300], [240, 286, 319, 322], [239, 335, 310, 369],
  [239, 335, 319, 322], [251, 266, 218, 325], [259, 300, 218, 325], [258, 322, 218, 325],
  [602, 323, 644, 339], [558, 365, 492, 361], [541, 348, 497, 400], [544, 325, 497, 400],
  [566, 320, 497, 400], [586, 338, 497, 400], [403, 452, 497, 400], [393, 409, 310, 369],
  [446, 297, 497, 400], [453, 275, 497, 400], [470, 290, 409, 215], [379, 300, 446, 297],
  [485, 307, 416, 313], [372, 322, 341, 283], [524, 228, 541, 242], [557, 195, 536, 173],
  [469, 208, 508, 186], [466, 185, 491, 200], [564, 216, 575, 273], [497, 400, 409, 215],
  [341, 283, 409, 215], [319, 322, 394, 257], [319, 322, 379, 240], [403, 429, 497, 400],
  [401, 236, 379, 240], [334, 236, 409, 215], [369, 387, 319, 322], [293, 281, 341, 305],
  [336, 444, 497, 400], [586, 338, 541, 242], [523, 334, 575, 273], [502, 327, 463, 312],
  [393, 409, 497, 300], [358, 420, 417, 355]
];

const svg = document.getElementById('graph');

function add(parent, tag, attrs, text) {
  const el = document.createElementNS(SVG, tag);
  for (const key in attrs) el.setAttribute(key, attrs[key]);
  if (text) el.textContent = text;
  parent.appendChild(el);
  return el;
}

const root = add(svg, 'g', { transform: 'translate(-30 -120)' });
const edgeLayer = add(root, 'g', {});
const nodeLayer = add(root, 'g', {});
const labelLayer = add(root, 'g', {});
let count = 0;

function edgeText(n) {
  if (n % 9 === 4) return 'role_as & President';
  if (n % 13 === 6) return 'is_branch_of';
  return 'hold_share & ' + (n * 7 % 13 + 1);
}

function drawEdge(x1, y1, x2, y2) {
  const dx = x2 - x1;
  const dy = y2 - y1;
  const len = Math.hypot(dx, dy);
  const ux = dx / len;
  const uy = dy / len;
  add(edgeLayer, 'line', {
    class: 'edge', 'marker-end': 'url(#arrow)',
    x1: x1 + ux * 7, y1: y1 + uy * 7, x2: x2 - ux * 8, y2: y2 - uy * 8
  });
  count++;
  if (len < 35) return;
  // keep the text upright
  let angle = Math.atan2(dy, dx) * 180 / Math.PI;
  if (angle > 90 || angle < -90) angle += 180;
  const x = (x1 + x2) / 2;
  const y = (y1 + y2) / 2;
  add(edgeLayer, 'text', { class: 'edge-label', x: x, y: y + 1, transform: `rotate(${angle} ${x} ${y})` }, edgeText(count));
}

function drawNode(x, y, name, corp) {
  add(nodeLayer, 'circle', { class: corp ? 'node node-corp' : 'node', cx: x, cy: y, r: 6.5 });
  if (name) add(labelLayer, 'text', { class: 'node-label', x: x, y: y + 10 }, name);
}

hubs.forEach(hub => {
  hub.nodes.forEach(([x, y, name, corp]) => {
    drawEdge(x, y, hub.x, hub.y);
    drawNode(x, y, name, corp);
  });
});
loose.forEach(node => drawNode(...node));
links.forEach(link => drawEdge(...link));

hubs.forEach(hub => {
  add(nodeLayer, 'circle', { class: 'hub-ring', cx: hub.x, cy: hub.y, r: 8 });
  drawNode(hub.x, hub.y, hub.name, true);
  if (hub.selected) nodeLayer.lastChild.classList.add('node-selected');
});
```
